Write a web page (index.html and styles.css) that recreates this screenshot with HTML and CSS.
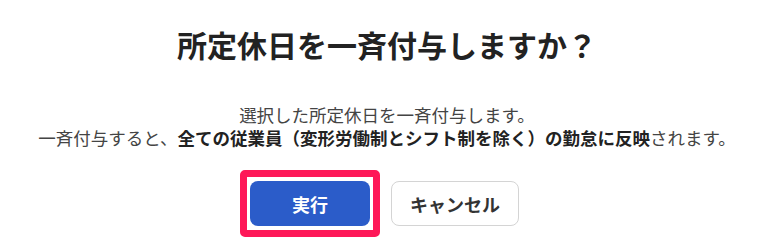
FILE: index.html
```html
<!DOCTYPE html>
<html lang="ja">
<head>
<meta charset="utf-8">
<link rel="stylesheet" href="styles.css">
</head>
<body>
<div class="dialog">
  <h1 class="title">所定休日を一斉付与しますか？</h1>
  <p class="message"><span class="line">選択した所定休日を一斉付与します。</span><span class="line">一斉付与すると、<strong>全ての従業員（変形労働制とシフト制を除く）の勤怠に反映</strong>されます。</span></p>
  <div class="actions">
    <button class="btn btn-primary highlighted">実行</button>
    <button class="btn btn-secondary">キャンセル</button>
  </div>
</div>
</body>
</html>
```

FILE: styles.css
```css
html, body {
  margin: 0;
  padding: 0;
  background: #ffffff;
}
body {
  font-family: "Noto Sans CJK JP", "Noto Sans", sans-serif;
  color: #222222;
}
.dialog {
  width: 774px;
  height: 246px;
  display: flex;
  flex-direction: column;
  align-items: center;
  padding-top: 24px;
  box-sizing: border-box;
}
.title {
  margin: 0;
  font-size: 30px;
  line-height: 40px;
  font-weight: 700;
  color: #222222;
}
.message {
  margin: 39px 0 0;
  font-size: 17.5px;
  line-height: 23px;
  text-align: center;
  color: #444444;
  display: flex;
  flex-direction: column;
  align-items: center;
}
.line {
  display: block;
  height: 23px;
}
.message strong {
  font-weight: 700;
  color: #222222;
}
.actions {
  margin-top: 32px;
  display: flex;
  gap: 21px;
  padding-right: 5px;
}
.btn {
  height: 45px;
  border-radius: 8px;
  font-family: "Noto Sans CJK JP", "Noto Sans", sans-serif;
  font-size: 18px;
  font-weight: 700;
  padding: 0;
  cursor: pointer;
}
.btn-primary {
  width: 120px;
  background: #2b5cc9;
  color: #ffffff;
  border: none;
}
.btn-secondary {
  width: 128px;
  background: #ffffff;
  color: #333333;
  border: 1px solid #d4d4d4;
}
.highlighted {
  position: relative;
}
.highlighted::after {
  content: "";
  position: absolute;
  top: -11px;
  bottom: -11px;
  left: -10px;
  right: -10px;
  border: 7px solid #fe1858;
  border-radius: 5px;
  pointer-events: none;
}
```
